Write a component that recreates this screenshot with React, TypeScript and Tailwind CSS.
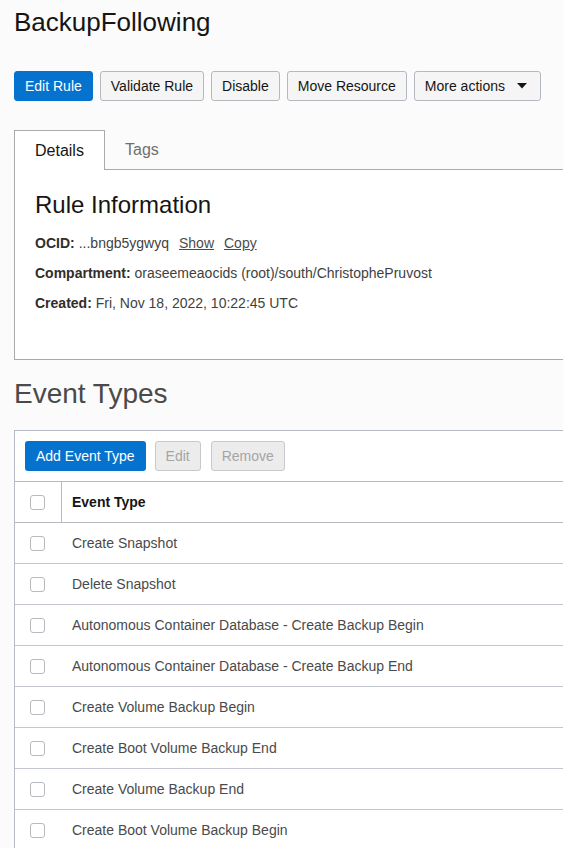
import React from "react";

const rows = [
  "Create Snapshot",
  "Delete Snapshot",
  "Autonomous Container Database - Create Backup Begin",
  "Autonomous Container Database - Create Backup End",
  "Create Volume Backup Begin",
  "Create Boot Volume Backup End",
  "Create Volume Backup End",
  "Create Boot Volume Backup Begin",
];

function Btn({ children, primary }: { children: React.ReactNode; primary?: boolean }) {
  return (
    <button
      className={
        primary
          ? "h-[30px] px-[10px] rounded-[3px] border border-[#0572ce] bg-[#0572ce] text-white text-[14px] leading-none"
          : "h-[30px] px-[10px] rounded-[3px] border border-[#b4b8bf] bg-[#f5f5f6] text-[#161513] text-[14px] leading-none"
      }
    >
      {children}
    </button>
  );
}

function Check() {
  return <div className="w-[15px] h-[15px] rounded-[3px] border border-[#b6b9be] bg-white" />;
}

export default function App() {
  return (
    <div
      className="min-h-[848px] w-[563px] overflow-hidden bg-[#fbfbfb] text-[#161513]"
      style={{ fontFamily: '"Liberation Sans", Arial, sans-serif' }}
    >
      <div className="pl-[14px] pt-[6px]">
        <h1 className="text-[26px] leading-[32px] text-[#161513]">BackupFollowing</h1>
      </div>

      <div className="flex gap-[7px] pl-[14px] mt-[33px]">
        <Btn primary>Edit Rule</Btn>
        <Btn>Validate Rule</Btn>
        <Btn>Disable</Btn>
        <Btn>Move Resource</Btn>
        <button className="h-[30px] pl-[10px] pr-[13px] rounded-[3px] border border-[#b4b8bf] bg-[#f5f5f6] text-[#161513] text-[14px] leading-none flex items-center gap-[12px]">
          More actions
          <svg width="10" height="6" viewBox="0 0 10 6">
            <path d="M0 0 L10 0 L5 5.5 Z" fill="#161513" />
          </svg>
        </button>
      </div>

      <div className="ml-[14px] mt-[29px]">
        <div className="flex">
          <div className="w-[91px] h-[40px] border border-b-0 border-[#aaaaaa] bg-white flex items-center pl-[20px] text-[16px] text-[#161513]">
            Details
          </div>
          <div className="flex-1 border-b border-[#aaaaaa] flex items-center pl-[20px] text-[16px] text-[#6f6f6f]">
            Tags
          </div>
        </div>
        <div className="h-[190px] border-l border-b border-[#aaaaaa] bg-white pl-[20px] pt-[20px]">
          <h2 className="text-[24px] leading-[30px] text-[#161513]">Rule Information</h2>
          <div className="mt-[14px] flex flex-col gap-[12px] text-[14px] leading-[18px] text-[#3f3f3f]">
            <div className="flex items-center">
              <span className="font-bold text-[#312d2a]">OCID:</span>
              <span className="ml-[4px]">...bngb5ygwyq</span>
              <span className="ml-[10px] underline text-[#4c4c4c]">Show</span>
              <span className="ml-[10px] underline text-[#4c4c4c]">Copy</span>
            </div>
            <div>
              <span className="font-bold text-[#312d2a]">Compartment:</span> oraseemeaocids (root)/south/ChristophePruvost
            </div>
            <div>
              <span className="font-bold text-[#312d2a]">Created:</span> Fri, Nov 18, 2022, 10:22:45 UTC
            </div>
          </div>
        </div>
      </div>

      <div className="pl-[14px] mt-[17px]">
        <h2 className="text-[28px] leading-[34px] text-[#4a4a4a]">Event Types</h2>
      </div>

      <div className="ml-[14px] mt-[19px] border-l border-t border-[#b5b9c0] bg-white">
        <div className="flex gap-[9px] pl-[10px] pt-[10px] pb-[10px] border-b border-[#b5b9c0]">
          <button className="h-[30px] px-[11px] rounded-[3px] bg-[#0572ce] text-white text-[14px] leading-none">
            Add Event Type
          </button>
          <button className="h-[30px] px-[10px] rounded-[3px] border border-[#c7c9cc] bg-[#ececec] text-[#a5a5a5] text-[14px] leading-none">
            Edit
          </button>
          <button className="h-[30px] px-[10px] ml-[1px] rounded-[3px] border border-[#c7c9cc] bg-[#ececec] text-[#a5a5a5] text-[14px] leading-none">
            Remove
          </button>
        </div>
        <div className="flex h-[41px] border-b border-[#b5b9c0]">
          <div className="w-[47px] flex items-center pl-[15px] border-r border-[#b5b9c0]">
            <Check />
          </div>
          <div className="flex items-center pl-[10px] text-[14px] font-bold text-[#161513]">Event Type</div>
        </div>
        {rows.map((r) => (
          <div key={r} className="flex h-[41px] border-b border-[#c3c6cc]">
            <div className="w-[47px] flex items-center pl-[15px]">
              <Check />
            </div>
            <div className="flex items-center pl-[10px] text-[14px] text-[#4a4a4a]">{r}</div>
          </div>
        ))}
      </div>
    </div>
  );
}
